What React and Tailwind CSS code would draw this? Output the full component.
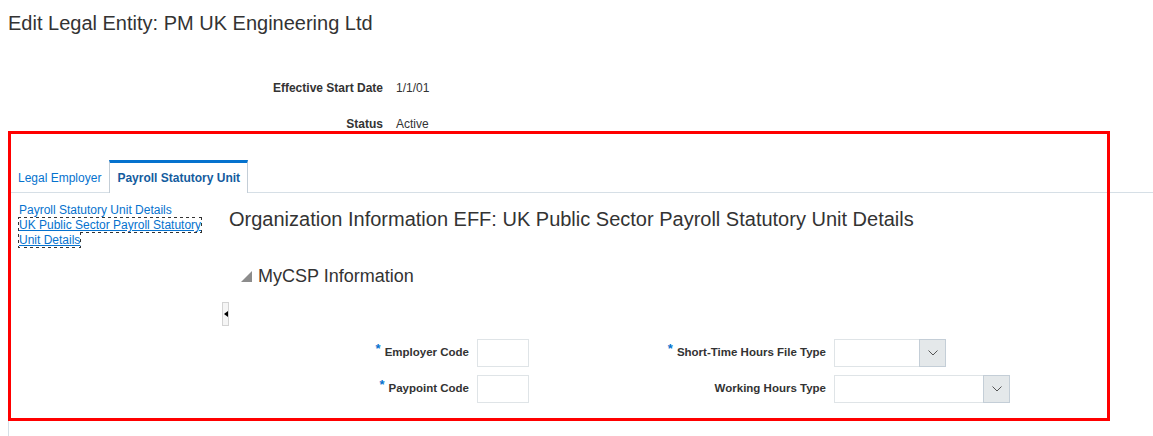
import React from "react";

function Chevron() {
  return (
    <svg width="10" height="6" viewBox="0 0 10 6" fill="none">
      <path d="M0.5 0.5 L5 5 L9.5 0.5" stroke="#555" strokeWidth="1" />
    </svg>
  );
}

function Field({ label, required, labelWidth, children }) {
  return (
    <div className="flex items-center">
      <div
        className="text-right text-[11.5px] font-bold text-[#333] pr-2"
        style={{ width: labelWidth }}
      >
        {required && <span className="text-[#0572ce] align-top mr-[4px] text-[13px] leading-[10px]">*</span>}
        {label}
      </div>
      {children}
    </div>
  );
}

function TextBox() {
  return <div className="w-[52px] h-[28px] border border-[#dfe4e7] bg-white" />;
}

function Select({ width }) {
  return (
    <div className="flex h-[28px] border border-[#dfe4e7] bg-white" style={{ width }}>
      <div className="flex-1" />
      <div className="w-[27px] -my-px -mr-px border border-[#c4ced7] bg-[#e4e8ea] flex items-center justify-center">
        <Chevron />
      </div>
    </div>
  );
}

export default function App() {
  return (
    <div className="relative w-[1153px] h-[436px] bg-white overflow-hidden font-['Liberation_Sans',Arial,sans-serif] text-[#333]">
      <h1 className="pl-2 pt-[11px] text-[20px] leading-6 text-[#333]">
        Edit Legal Entity: PM UK Engineering Ltd
      </h1>

      <div className="mt-[43px] flex items-center h-5 text-[12px]">
        <div className="w-[383px] text-right font-bold">Effective Start Date</div>
        <div className="ml-[13px]">1/1/01</div>
      </div>
      <div className="mt-4 flex items-center h-5 text-[12px]">
        <div className="w-[383px] text-right font-bold">Status</div>
        <div className="ml-[13px]">Active</div>
      </div>

      <div className="mt-[26px] ml-2 border-l border-[#d6dfe6] h-[300px]">
        <div className="flex items-end pl-[2px] border-b border-[#d6dfe6] h-[33px]">
          <div className="px-[7px] h-[29px] flex items-center text-[12px] text-[#0572ce]">
            Legal Employer
          </div>
          <div className="ml-[1px] -mb-px px-[7px] h-[33px] flex items-center bg-white border-t-[3px] border-t-[#0572ce] border-x border-x-[#c4ced7] text-[12px] font-bold text-[#145c9e]">
            Payroll Statutory Unit
          </div>
        </div>

        <div className="flex">
          <div className="w-[220px] pl-[10px] pt-[10px] text-[12px] leading-[15px] text-[#0572ce]">
            <div>Payroll Statutory Unit Details</div>
            <div className="w-[184px]">
              <span className="underline outline-1 outline-dotted outline-[#333]">
                UK Public Sector Payroll Statutory Unit Details
              </span>
            </div>
          </div>

          <div className="pt-[14px]">
            <h2 className="text-[20px] leading-6 text-[#333]">
              Organization Information EFF: UK Public Sector Payroll Statutory Unit Details
            </h2>

            <div className="mt-[34px] ml-3 flex items-center h-[22px]">
              <svg width="11" height="11" viewBox="0 0 11 11" className="mt-[1px]">
                <polygon points="0,11 11,11 11,0" fill="#8c8c8c" />
              </svg>
              <span className="ml-[6px] text-[18px] text-[#333]">MyCSP Information</span>
            </div>

            <div className="mt-[15px] -ml-[7px] w-[7px] h-[24px] border border-[#d3d3d3] bg-[#f5f5f5] flex items-center justify-center">
              <svg width="4" height="6" viewBox="0 0 4 6">
                <polygon points="4,0 4,6 0,3" fill="#000" />
              </svg>
            </div>

            <div className="mt-[13px] flex flex-col gap-2">
              <div className="flex">
                <Field label="Employer Code" required labelWidth="248px">
                  <TextBox />
                </Field>
                <Field label="Short-Time Hours File Type" required labelWidth="305px">
                  <Select width="112px" />
                </Field>
              </div>
              <div className="flex">
                <Field label="Paypoint Code" required labelWidth="248px">
                  <TextBox />
                </Field>
                <Field label="Working Hours Type" labelWidth="305px">
                  <Select width="176px" />
                </Field>
              </div>
            </div>
          </div>
        </div>
      </div>

      <div className="absolute left-2 top-[131px] w-[1102px] h-[290px] border-[3px] border-[#ff0000] pointer-events-none" />
    </div>
  );
}
